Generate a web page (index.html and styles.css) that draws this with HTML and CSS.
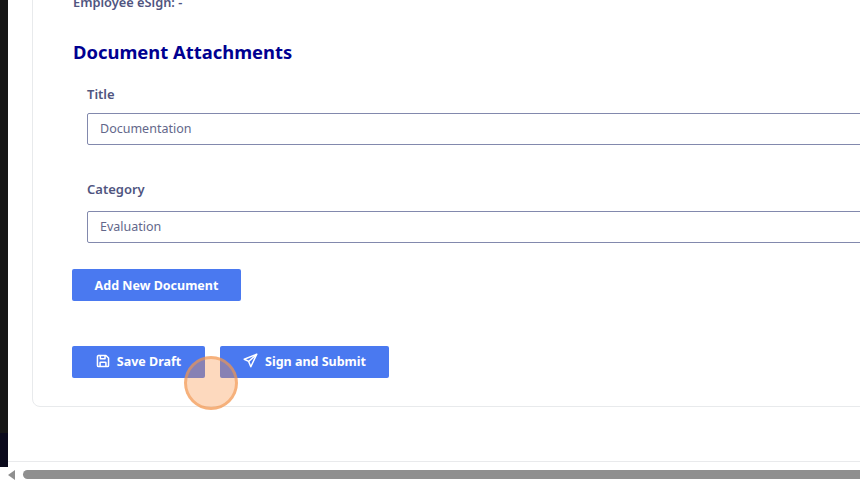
FILE: index.html
```html
<!DOCTYPE html>
<html lang="en">
<head>
<meta charset="utf-8">
<title>Document Attachments</title>
<link rel="stylesheet" href="styles.css">
</head>
<body>
<div class="app">
  <div class="viewport">
    <aside class="sidebar"></aside>
    <main class="main">
      <section class="card">
        <p class="esign">Employee eSign: -</p>
        <h2 class="heading">Document Attachments</h2>
        <div class="field field-title">
          <label class="label">Title</label>
          <div class="input">Documentation</div>
        </div>
        <div class="field field-category">
          <label class="label">Category</label>
          <div class="input">Evaluation</div>
        </div>
        <button class="btn btn-add">Add New Document</button>
        <div class="actions">
          <button class="btn btn-save">
            <svg class="icon" viewBox="0 0 24 24" fill="none" stroke="currentColor" stroke-width="2.600" stroke-linejoin="round"><path d="M4 2.500h13l4.500 4.500v12.500a2 2 0 0 1-2 2h-15a2 2 0 0 1-2-2V4.500a2 2 0 0 1 2-2z"/><path d="M7.500 2.500v5.500h8V2.500"/><path d="M7 21.500v-6.500a1 1 0 0 1 1-1h8a1 1 0 0 1 1 1v6.500"/></svg>
            Save Draft
          </button>
          <button class="btn btn-submit">
            <svg class="icon icon-send" viewBox="0 0 24 24" fill="none" stroke="currentColor" stroke-width="2.400" stroke-linejoin="round"><path d="M22 2 2 10l7 3.500L12.500 22z"/><path d="M22 2 9 13.500"/></svg>
            Sign and Submit
          </button>
          <span class="cursor"></span>
        </div>
      </section>
    </main>
  </div>
  <div class="scrollbar">
    <span class="arrow"></span>
    <span class="thumb"></span>
  </div>
</div>
</body>
</html>
```

FILE: styles.css
```css
* { box-sizing: border-box; }
html, body { margin: 0; height: 100%; overflow: hidden; background: #fff; }
body { font-family: "Noto Sans", sans-serif; color: #50557f; }

.app { width: 860px; height: 482px; display: flex; flex-direction: column; overflow: hidden; }
.viewport { height: 467px; flex: none; display: flex; }
.sidebar { width: 8px; flex: none; background: linear-gradient(#161616 0 433px, #0b0a1c 433px); }
.main { flex: none; width: 852px; height: 462px; padding-left: 24px; border-bottom: 1px solid #e9eaec; overflow: hidden; }

.card {
  margin-top: -10px;
  width: 1000px;
  height: 417px;
  border: 1px solid #e8eaec;
  border-radius: 8px;
  padding: 1px 39px 0;
}
.esign { margin: 0; height: 20px; font-size: 12.800px; line-height: 20px; font-weight: 600; padding-left: 1px; }
.heading { margin: 26px 0 0; padding-left: 1px; height: 27px; font-size: 18.400px; line-height: 27px; font-weight: 700; color: #000091; }

.field { margin-left: 15px; width: 900px; }
.field-title { margin-top: 20px; }
.field-category { margin-top: 35px; }
.label { display: block; height: 18px; font-size: 13px; line-height: 18px; font-weight: 600; }
.field-title .input { margin-top: 10px; }
.field-category .input { margin-top: 13px; }
.input {
  height: 32px;
  border: 1px solid #8289ad;
  border-radius: 2px;
  padding-left: 12px;
  font-size: 12.500px;
  line-height: 29px;
  color: #63678a;
}

.btn {
  height: 32px;
  display: flex;
  align-items: center;
  justify-content: center;
  gap: 7px;
  border: 0;
  border-radius: 2px;
  background: #4a79f0;
  color: #fff;
  font-family: inherit;
  font-size: 12.500px;
  font-weight: 700;
  padding: 0;
}
.btn-add { width: 169px; margin-top: 26px; }
.actions { display: flex; gap: 15px; margin-top: 45px; position: relative; }
.btn-save { width: 133px; padding-bottom: 2px; }
.btn-submit { width: 169px; padding-bottom: 2px; }
.icon { width: 14px; height: 14px; flex: none; }
.icon-send { width: 15px; height: 15px; margin-top: -2px; }
.cursor {
  position: absolute;
  left: 112px;
  top: 10px;
  width: 54px;
  height: 54px;
  border-radius: 50%;
  border: 3px solid rgba(240, 150, 80, .6);
  background: rgba(250, 146, 70, .35);
}

.scrollbar { height: 15px; display: flex; align-items: center; padding-left: 8px; gap: 8px; flex: none; }
.arrow { width: 0; height: 0; border-style: solid; border-width: 5px 7px 5px 0; border-color: transparent #8f8f8f transparent transparent; }
.thumb { flex: 1; height: 9px; border-radius: 5px 0 0 5px; background: #8f8f8f; }
```
